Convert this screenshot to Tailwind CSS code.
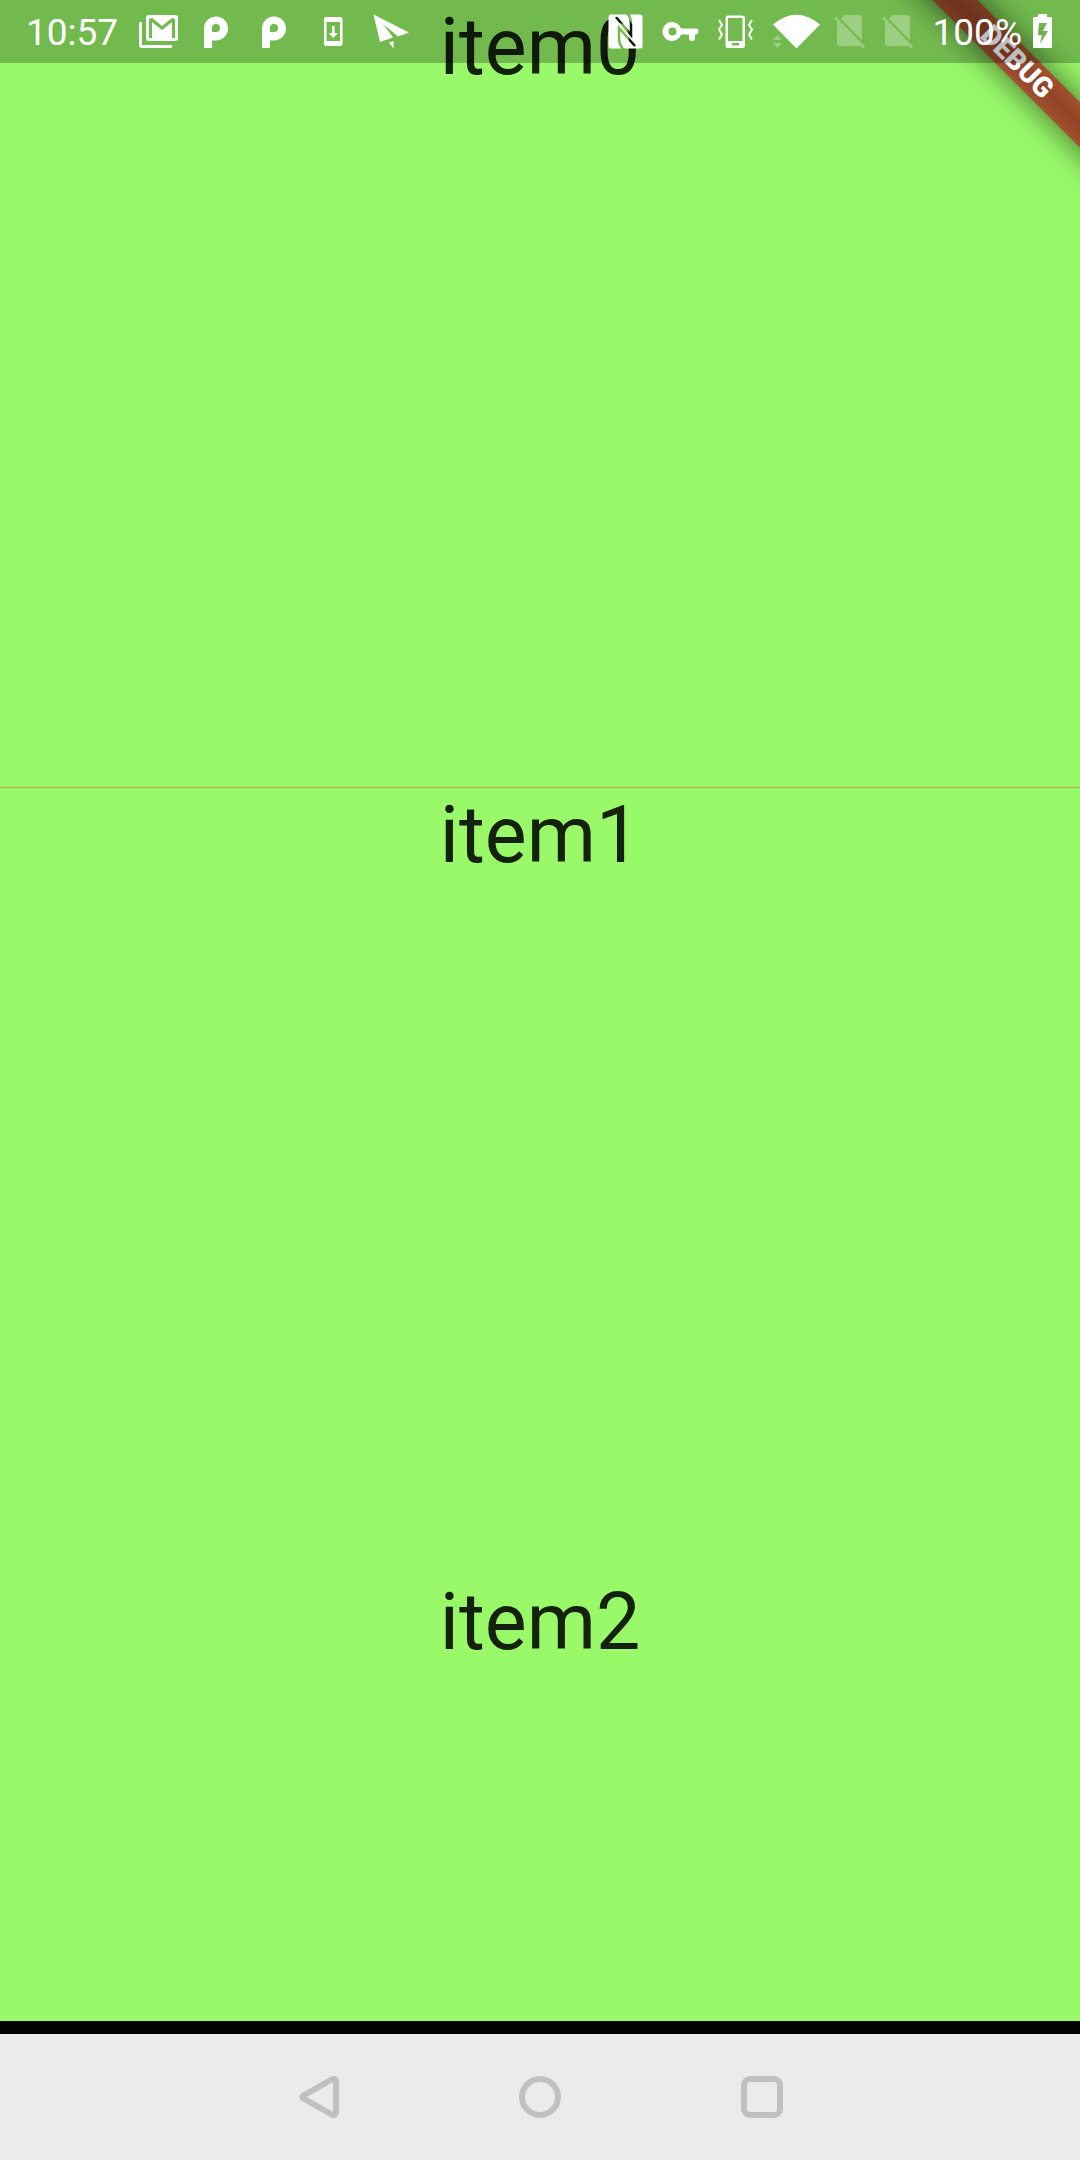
<!DOCTYPE html>
<html lang="en">
<head>
<meta charset="utf-8">
<meta name="viewport" content="width=device-width, initial-scale=1">
<title>Items</title>
<script src="https://cdn.jsdelivr.net/npm/@tailwindcss/browser@4"></script>
</head>
<body class="bg-black font-['Roboto',sans-serif]">
<div class="relative flex h-screen flex-col overflow-hidden">
  <main class="relative min-h-0 flex-1 overflow-hidden bg-[#99f969] text-center text-[79px] leading-[94px] text-black/87">
    <ul>
      <li class="h-[788px] border-b border-[#b9a550]">item0</li>
      <li class="h-[787px]">item1</li>
      <li class="h-[787px]">item2</li>
    </ul>
    <!-- Debug banner -->
    <div class="absolute top-0 right-0 size-[220px] overflow-hidden">
      <div class="absolute top-[46px] -right-[87px] w-[300px] rotate-45 bg-linear-to-b from-[#a0522d] via-[#934328] to-[#a0522d] text-center text-[28px] leading-[32px] font-black text-white shadow-[0_0_32px_rgba(0,0,0,0.6)]">DEBUG</div>
    </div>
  </main>
  <div class="h-[13px] shrink-0 bg-black"></div>
  <nav class="flex h-[126px] shrink-0 items-center justify-center gap-[156px] bg-[#ebebeb]">
    <button aria-label="Back"><svg class="h-[42px] w-[66px]" viewBox="0 0 66 42" fill="none" stroke="#c0c0c0" stroke-width="6" stroke-linejoin="round"><path d="M18.500 19.500Q16 21 18.500 22.500L47 38.600Q51 40 51 36V6Q51 2 47 3.400Z"/></svg></button>
    <button aria-label="Home"><svg class="h-[42px] w-[66px]" viewBox="0 0 66 42" fill="none" stroke="#c0c0c0" stroke-width="6"><circle cx="33" cy="21" r="18"/></svg></button>
    <button aria-label="Recents"><svg class="h-[42px] w-[66px]" viewBox="0 0 66 42" fill="none" stroke="#c0c0c0" stroke-width="6"><rect x="15" y="3" width="36" height="36" rx="6"/></svg></button>
  </nav>
  <!-- Status bar -->
  <header class="absolute inset-x-0 top-0 flex h-[63px] items-center justify-between bg-black/25 text-[37px] leading-[63px] text-white">
    <div class="flex items-center pl-[26px]">
      <time class="w-[104px] pt-[2px]">10:57</time>
      <svg class="h-[63px] w-[58px]" viewBox="0 0 58 63" fill="#fff"><path fill-rule="evenodd" d="M19 15H45Q48 15 48 18V38Q48 41 45 41H19Q16 41 16 38V18Q16 15 19 15ZM19 19V38H22V22L32 30L42 22V38H45V19L42 18L32 26L22 18Z"/><path d="M9 22H12V45H42V48H12Q9 48 9 45Z"/></svg>
      <svg class="h-[63px] w-[58px]" viewBox="0 0 58 63" fill="#fff"><path fill-rule="evenodd" d="M16 48V28A12 12 0 1 1 28 40.500H24V48ZM24 32H28A4 4 0 1 0 24 28Z"/></svg>
      <svg class="h-[63px] w-[58px]" viewBox="0 0 58 63" fill="#fff"><path fill-rule="evenodd" d="M16 48V28A12 12 0 1 1 28 40.500H24V48ZM24 32H28A4 4 0 1 0 24 28Z"/></svg>
      <svg class="h-[63px] w-[58px]" viewBox="0 0 58 63" fill="#fff"><path fill-rule="evenodd" d="M22 17H36Q38.500 17 38.500 19V44Q38.500 46 36 46H22Q20 46 20 44V19Q20 17 22 17ZM22.500 22V41H36V22Z"/><path d="M28 26H30.500V33H34L29.200 38L24.500 33H28Z"/></svg>
      <svg class="h-[63px] w-[58px]" viewBox="0 0 58 63" fill="#fff"><path d="M11.500 14.500L47 32.500L36 36.500L21 24L31 37.500L18 42Z"/><path d="M27 42.500L31.500 41V48.500Z"/></svg>
    </div>
    <div class="flex items-center">
      <svg class="h-[63px] w-[55px]" viewBox="0 0 55 63"><mask id="nfc"><rect x="10.500" y="14.500" width="34" height="34" rx="2.500" fill="#fff"/><path d="M18 17L33 35V24Q33 17 29 13M37 46L21 28V38Q21 45 26 50" fill="none" stroke="#000" stroke-width="2.500"/></mask><rect width="55" height="63" fill="#fff" mask="url(#nfc)"/></svg>
      <svg class="h-[63px] w-[55px]" viewBox="0 0 55 63" fill="#fff"><path fill-rule="evenodd" d="M28 28.500H43Q45.500 28.500 45.500 31Q45.500 34.500 42 34.500V38Q42 41 39 41T36 38V34.500H28A9.500 9.500 0 1 1 28 28.500ZM19.500 27.500A4 4 0 1 0 19.500 35.500A4 4 0 1 0 19.500 27.500Z"/></svg>
      <svg class="h-[63px] w-[55px]" viewBox="0 0 55 63" fill="#fff"><path fill-rule="evenodd" d="M20 15.500H34Q37 15.500 37 18V45.500Q37 48 34 48H20Q17.500 48 17.500 45.500V18Q17.500 15.500 20 15.500ZM20 18V41H34.500V18ZM24 43V45.500H31V43Z"/><g fill="none" stroke="#fff" stroke-width="2"><path d="M11 20L14 25L11 29.500L14 34.500L11 39.500"/><path d="M44 20L41 25L44 29.500L41 34.500L44 39.500"/></g></svg>
      <svg class="h-[63px] w-[63px]" viewBox="0 0 63 63" fill="#fff"><path d="M10 24.500Q33.500 5 57 24.500L33.500 48.500Z"/><path fill-opacity=".3" d="M10 40L14.500 35L19 40ZM10 43H19L14.500 48Z"/></svg>
      <svg class="h-[63px] w-[48px]" viewBox="0 0 48 63"><path fill="#fff" fill-opacity=".3" d="M18 15H33.500Q36 15 36 17.500V40.500L15 19ZM11 22L34 45.500L33 46H14Q11 46 11 43ZM8 18.500L10 17L39 46.500L37 48.500Z"/></svg>
      <svg class="h-[63px] w-[48px]" viewBox="0 0 48 63"><path fill="#fff" fill-opacity=".3" d="M18 15H33.500Q36 15 36 17.500V40.500L15 19ZM11 22L34 45.500L33 46H14Q11 46 11 43ZM8 18.500L10 17L39 46.500L37 48.500Z"/></svg>
      <span class="w-[100px] pt-[2px] text-right">100%</span>
      <svg class="h-[63px] w-[58px]" viewBox="0 0 58 63" fill="#fff"><path fill-rule="evenodd" d="M16 14H25V17H29Q30 17 30 18.500V47Q30 48 29 48H12Q11 48 11 47V18.500Q11 17 12 17H16ZM17 23L16 35H20L18 44L26 31H21L25 23Z"/></svg>
    </div>
  </header>
</div>
</body>
</html>
